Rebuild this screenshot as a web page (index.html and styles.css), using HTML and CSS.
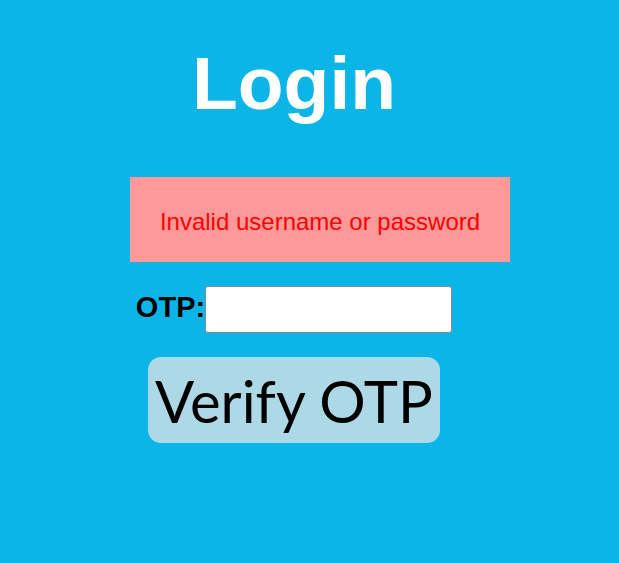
FILE: index.html
```html
<!DOCTYPE html>
<html>
<head>
<meta charset="utf-8">
<link rel="stylesheet" href="styles.css">
</head>
<body>
<div class="page">
  <h1 class="title">Login</h1>
  <div class="error">Invalid username or password</div>
  <form class="otp-form">
    <div class="otp-row">
      <label class="otp-label" for="otp">OTP:</label>
      <input class="otp-input" id="otp" type="text">
    </div>
    <button class="verify" type="button">Verify OTP</button>
  </form>
</div>
</body>
</html>
```
FILE: styles.css
```css
html, body {
  margin: 0;
  padding: 0;
  background: #0bb5e8;
  height: 100%;
}
.page {
  width: 588px;
  display: flex;
  flex-direction: column;
  align-items: center;
  font-family: "Liberation Sans", Arial, sans-serif;
}
.title {
  margin: 40px 0 0 0;
  font-size: 75px;
  line-height: 86px;
  font-weight: bold;
  color: #ffffff;
}
.error {
  align-self: flex-start;
  margin: 51px 0 0 130px;
  width: 380px;
  height: 85px;
  box-sizing: border-box;
  padding-top: 4px;
  background: #ff9999;
  color: #ff0000;
  font-size: 24px;
  display: flex;
  align-items: center;
  justify-content: center;
}
.otp-form {
  display: flex;
  flex-direction: column;
  align-items: center;
  margin-top: 24px;
}
.otp-row {
  display: flex;
  align-items: center;
}
.otp-label {
  font-size: 29px;
  font-weight: bold;
  color: #000;
  padding-bottom: 5px;
}
.otp-input {
  width: 247px;
  height: 47px;
  box-sizing: border-box;
  border: 1px solid #8a8a8a;
  border-radius: 3px;
  background: #fff;
  margin: 0;
  padding: 0 4px;
}
.verify {
  margin-top: 24px;
  width: 292px;
  height: 86px;
  background: #add8e6;
  border: none;
  border-radius: 13px;
  font-family: Lato, "Open Sans", sans-serif;
  font-size: 58px;
  white-space: nowrap;
  color: #000;
  padding: 0;
  display: flex;
  align-items: center;
  justify-content: center;
}
```
